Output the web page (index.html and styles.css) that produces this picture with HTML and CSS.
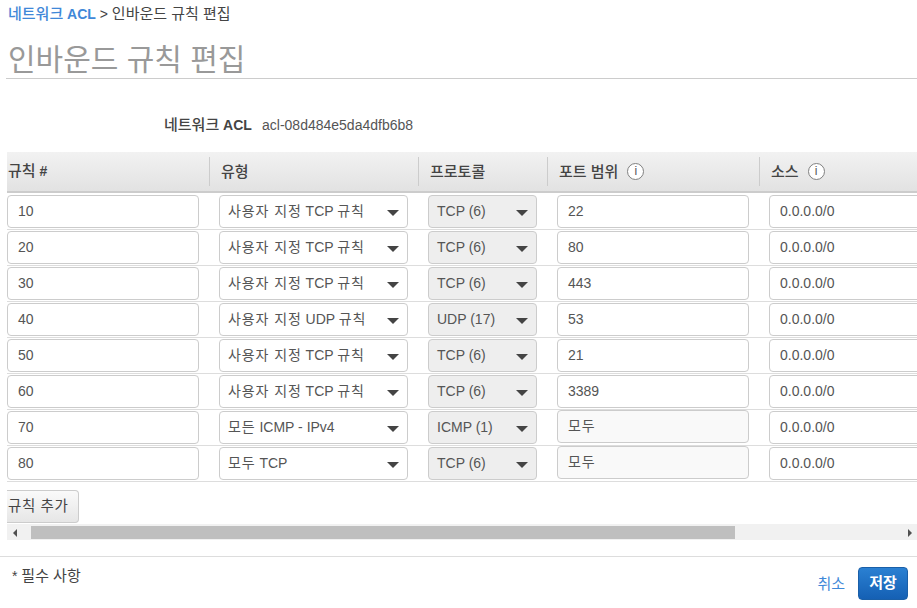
FILE: index.html
```html
<!DOCTYPE html>
<html lang="ko">
<head>
<meta charset="utf-8">
<title>인바운드 규칙 편집</title>
<link rel="stylesheet" href="styles.css">
</head>
<body>
<main class="page">
  <nav class="crumbs"><a class="crumb-link" href="#"><span class="ko">네트워크</span> ACL</a> &gt; <span class="ko">인바운드 규칙 편집</span></nav>
  <h1 class="title">인바운드 규칙 편집</h1>
  <div class="acl"><span class="acl-label"><span class="ko">네트워크</span> ACL</span><span class="acl-id">acl-08d484e5da4dfb6b8</span></div>
  <div class="table-wrap">
    <div class="table">
      <div class="row head">
        <div class="th first"><span><span class="ko">규칙</span> #</span></div>
        <div class="th"><span class="ko">유형</span></div>
        <div class="th"><span class="ko">프로토콜</span></div>
        <div class="th"><span class="ko">포트 범위</span> <span class="info">i</span></div>
        <div class="th"><span class="ko">소스</span> <span class="info">i</span></div>
      </div>
      <div class="row"><div class="td first"><div class="field">10</div></div><div class="td"><div class="field sel"><span class="ko">사용자 지정</span> TCP <span class="ko">규칙</span></div></div><div class="td"><div class="field sel dis">TCP (6)</div></div><div class="td"><div class="field">22</div></div><div class="td"><div class="field">0.0.0.0/0</div></div></div>
      <div class="row"><div class="td first"><div class="field">20</div></div><div class="td"><div class="field sel"><span class="ko">사용자 지정</span> TCP <span class="ko">규칙</span></div></div><div class="td"><div class="field sel dis">TCP (6)</div></div><div class="td"><div class="field">80</div></div><div class="td"><div class="field">0.0.0.0/0</div></div></div>
      <div class="row"><div class="td first"><div class="field">30</div></div><div class="td"><div class="field sel"><span class="ko">사용자 지정</span> TCP <span class="ko">규칙</span></div></div><div class="td"><div class="field sel dis">TCP (6)</div></div><div class="td"><div class="field">443</div></div><div class="td"><div class="field">0.0.0.0/0</div></div></div>
      <div class="row"><div class="td first"><div class="field">40</div></div><div class="td"><div class="field sel"><span class="ko">사용자 지정</span> UDP <span class="ko">규칙</span></div></div><div class="td"><div class="field sel dis">UDP (17)</div></div><div class="td"><div class="field">53</div></div><div class="td"><div class="field">0.0.0.0/0</div></div></div>
      <div class="row"><div class="td first"><div class="field">50</div></div><div class="td"><div class="field sel"><span class="ko">사용자 지정</span> TCP <span class="ko">규칙</span></div></div><div class="td"><div class="field sel dis">TCP (6)</div></div><div class="td"><div class="field">21</div></div><div class="td"><div class="field">0.0.0.0/0</div></div></div>
      <div class="row"><div class="td first"><div class="field">60</div></div><div class="td"><div class="field sel"><span class="ko">사용자 지정</span> TCP <span class="ko">규칙</span></div></div><div class="td"><div class="field sel dis">TCP (6)</div></div><div class="td"><div class="field">3389</div></div><div class="td"><div class="field">0.0.0.0/0</div></div></div>
      <div class="row"><div class="td first"><div class="field">70</div></div><div class="td"><div class="field sel"><span class="ko">모든</span> ICMP - IPv4</div></div><div class="td"><div class="field sel dis">ICMP (1)</div></div><div class="td"><div class="field ro"><span class="ko">모두</span></div></div><div class="td"><div class="field">0.0.0.0/0</div></div></div>
      <div class="row"><div class="td first"><div class="field">80</div></div><div class="td"><div class="field sel"><span class="ko">모두</span> TCP</div></div><div class="td"><div class="field sel dis">TCP (6)</div></div><div class="td"><div class="field ro"><span class="ko">모두</span></div></div><div class="td"><div class="field">0.0.0.0/0</div></div></div>
    </div>
    <div class="add-bar"><button class="add-btn" type="button"><span class="ko">규칙 추가</span></button></div>
    <div class="scrollbar">
      <span class="arrow left"></span>
      <div class="track"><div class="thumb"></div></div>
      <span class="arrow right"></span>
    </div>
  </div>
  <footer class="footer">
    <span class="req">* <span class="ko">필수 사항</span></span>
    <div class="actions">
      <a class="cancel ko" href="#">취소</a>
      <button class="save ko" type="button">저장</button>
    </div>
  </footer>
</main>
</body>
</html>
```
FILE: styles.css
```css
* { box-sizing: border-box; }
html, body { margin: 0; padding: 0; }
body {
  width: 917px;
  height: 608px;
  overflow: hidden;
  background: #fff;
  color: #444;
  font-family: "Liberation Sans", "Noto Sans CJK KR", sans-serif;
  font-size: 14px;
}
.ko { font-size: 14px; letter-spacing: 0.9px; }
.crumbs .ko, .acl .ko, .th .ko { font-size: 15px; letter-spacing: 0; }
.acl .ko, .th .ko, .crumb-link .ko { font-weight: 500; }
.page { display: flex; flex-direction: column; height: 608px; }
.crumbs { padding: 4px 0 0 8px; height: 42px; line-height: 20px; color: #444; }
.crumb-link { color: #3f88d8; font-weight: 700; text-decoration: none; }
.title {
  margin: 0 0 0 6px;
  height: 37px;
  padding: 0 0 0 2px;
  border-bottom: 1px solid #ccc;
  color: #999;
  font-size: 30px;
  font-weight: 400;
  line-height: 36px;
}
.acl { display: flex; height: 73px; padding: 36px 0 0 164px; line-height: 20px; }
.acl-label { font-weight: 700; color: #444; width: 98px; }
.acl-id { color: #555; }
.table-wrap { margin-left: 7px; width: 910px; overflow: hidden; }
.table { width: 1100px; }
.row {
  display: grid;
  grid-template-columns: 202px 209px 129px 212px 348px;
  height: 36px;
  border-bottom: 1px solid #ddd;
  padding-top: 1px;
}
.head {
  height: 41px;
  padding-top: 0;
  border-bottom: 2px solid #ccc;
  background: linear-gradient(#f2f2f2, #e2e2e2);
  font-weight: 700;
  margin-bottom: 1px;
}
.th {
  display: flex;
  align-items: center;
  gap: 9px;
  height: 29px;
  margin-top: 5px;
  padding-left: 11px;
  border-left: 1px solid #ccc;
  color: #444;
  line-height: 29px;
}
.th.first { padding-left: 1px; border-left: 0; }
.info {
  display: inline-flex;
  align-items: center;
  justify-content: center;
  width: 17px;
  height: 17px;
  border: 1px solid #808080;
  border-radius: 50%;
  background: #fff;
  color: #555;
  font-size: 12px;
  font-weight: 400;
  line-height: 15px;
}
.td { padding-left: 10px; }
.td.first { padding-left: 0; }
.field {
  position: relative;
  height: 33px;
  padding: 0 10px;
  border: 1px solid #ccc;
  border-radius: 4px;
  background: #fff;
  color: #555;
  line-height: 31px;
  white-space: nowrap;
}
.td.first .field { width: 192px; }
.td:nth-child(2) .field { width: 189px; padding-left: 8px; }
.td:nth-child(3) .field { width: 109px; padding-left: 8px; }
.td:nth-child(4) .field { width: 192px; }
.td:nth-child(5) .field { width: 192px; }
.sel::after {
  content: "";
  position: absolute;
  right: 8px;
  top: 14px;
  border-left: 6px solid transparent;
  border-right: 6px solid transparent;
  border-top: 6px solid #444;
}
.dis { background: #eee; }
.td .ro { height: 33px; margin-top: -1px; background: #f9f9f9; }
.add-bar { height: 42px; padding-top: 8px; }
.add-btn {
  display: block;
  width: 72px;
  height: 33px;
  padding: 0 0 3px 1px;
  border: 1px solid #ccc;
  border-left: 0;
  border-radius: 0 4px 4px 0;
  background: linear-gradient(#fafafa, #e6e6e6);
  color: #444;
  font: inherit;
  text-align: left;
}
.add-btn .ko { font-size: 14.5px; letter-spacing: 0.6px; }
.scrollbar {
  display: flex;
  align-items: center;
  height: 17px;
  background: #f1f1f1;
}
.arrow { display: block; width: 24px; height: 13px; position: relative; flex: none; }
.arrow::after {
  content: "";
  position: absolute;
  top: 3px;
  border-top: 4px solid transparent;
  border-bottom: 4px solid transparent;
}
.arrow.left::after { left: 6px; border-right: 4px solid #505050; }
.arrow.right { width: 17px; }
.arrow.right::after { right: 5px; border-left: 4px solid #505050; }
.track { flex: 1; height: 13px; }
.thumb { width: 704px; height: 13px; background: #bfbfbf; }
.footer {
  position: relative;
  display: flex;
  justify-content: space-between;
  margin-top: 16px;
  height: 52px;
  border-top: 1px solid #ddd;
  padding: 9px 9px 0 12px;
}
.req { color: #444; line-height: 20px; }
.req .ko { font-size: 15px; letter-spacing: 0; }
.actions { display: flex; align-items: flex-start; gap: 13px; }
.cancel { color: #3f88d8; text-decoration: none; line-height: 33px; margin-top: 1px; font-size: 15px; letter-spacing: 0; }
.save {
  width: 50px;
  height: 33px;
  margin-top: 1px;
  padding: 0 0 4px;
  border: 1px solid #1a5fa8;
  border-radius: 4px;
  background: linear-gradient(#2a80d2, #1560b4);
  color: #fff;
  font-family: inherit;
  font-size: 15px;
  font-weight: 700;
  letter-spacing: 0;
}
```
